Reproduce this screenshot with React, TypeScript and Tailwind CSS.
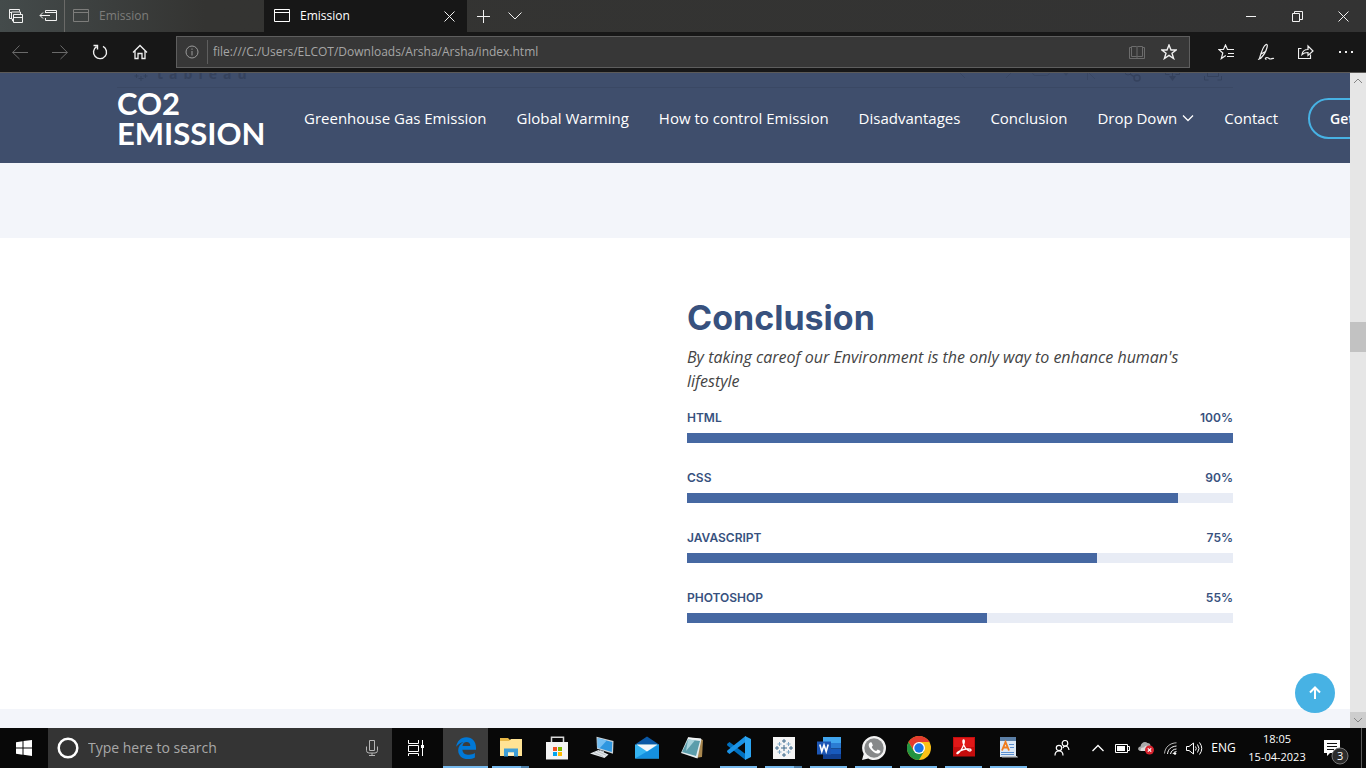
import React from "react";

type IconProps = { className?: string; children: React.ReactNode; w?: number; h?: number };

/** Thin-stroke icon drawn on a pixel grid of w x h. */
function Line({ className = "", children, w = 16, h = 16 }: IconProps) {
  return (
    <svg
      width={w}
      height={h}
      viewBox={`0 0 ${w} ${h}`}
      fill="none"
      stroke="currentColor"
      strokeWidth={1}
      aria-hidden="true"
      className={`shrink-0 ${className}`}
    >
      {children}
    </svg>
  );
}

function WindowIcon() {
  return (
    <Line w={16} h={14}>
      <path d="M.5.5h15v12H.5zM.5 3.5h15" />
    </Line>
  );
}

function TabStrip() {
  return (
    <div className="flex h-8 bg-linear-to-r from-[#444b4b] via-[#343432] via-15% to-[#333333] text-[#f2f2f2]">
      <div className="flex w-[65px] shrink-0 border-r border-[#6a6a68]">
        <button aria-label="Tabs you've set aside" className="grid w-8 place-items-center">
          <Line>
            <path d="M3 10.500H1.500v-9h10v2M1.500 4.500H4M7 13h-2.500v-2H3.500v-7h9v3" />
            <path fill="#434948" d="M5.500 6.500h9v8h-9zM5.500 9.500h9" />
          </Line>
        </button>
        <button aria-label="Set these tabs aside" className="grid w-8 place-items-center">
          <Line w={18}>
            <path d="M6.500 5V2.500h11v10h-11V10M6.500 4.500h11M1 7.500h10M4 4.500l-3 3 3 3" />
          </Line>
        </button>
      </div>
      <button className="flex w-[199px] shrink-0 items-center gap-2.5 px-2 text-xs text-[#7d7d7b]">
        <WindowIcon />
        Emission
      </button>
      <div className="flex w-[203px] shrink-0 items-center bg-[#171717] px-2.5">
        <button className="flex flex-1 items-center gap-2.5 text-xs text-white">
          <WindowIcon />
          Emission
        </button>
        <button aria-label="Close tab" className="grid size-4 place-items-center">
          <Line w={11} h={11}>
            <path d="M.5.5l10 10M10.500.5l-10 10" />
          </Line>
        </button>
      </div>
      <button aria-label="New tab" className="grid w-8 place-items-center">
        <Line w={13} h={13}>
          <path d="M6.500 0v13M0 6.500h13" />
        </Line>
      </button>
      <button aria-label="Show tab previews" className="grid w-8 place-items-center">
        <Line w={14} h={8}>
          <path d="M.5.5l6.500 6.500L13.500.5" />
        </Line>
      </button>
      <div className="ml-auto flex">
        <button aria-label="Minimize" className="grid w-[46px] place-items-center">
          <Line w={10} h={1}>
            <path d="M0 .5h10" />
          </Line>
        </button>
        <button aria-label="Restore" className="grid w-[46px] place-items-center">
          <Line w={11} h={11}>
            <path d="M.5 2.500h7v8h-7zM2.500 2.500v-2h8v8h-3" />
          </Line>
        </button>
        <button aria-label="Close" className="grid w-[46px] place-items-center">
          <Line w={11} h={11}>
            <path d="M.5.5l10 10M10.500.5l-10 10" />
          </Line>
        </button>
      </div>
    </div>
  );
}

const star = "M8 1l2 5h5.200l-4.200 3.300 1.600 5.200L8 11.400l-4.600 3.100L5 9.300.8 6H6z";

function Toolbar() {
  return (
    <div className="relative z-10 flex h-[41px] items-center border-b border-[#5c5a58] bg-[#171717] text-[#f0f0f0]">
      <button aria-label="Back" className="grid size-10 place-items-center text-[#6a6a6a]">
        <Line>
          <path d="M.5 8.500H16M7.500 1.500L.7 8.500l6.800 6.500" />
        </Line>
      </button>
      <button aria-label="Forward" className="grid size-10 place-items-center text-[#6a6a6a]">
        <Line>
          <path d="M0 8.500h15.500M8.500 1.500l6.800 7L8.500 15" />
        </Line>
      </button>
      <button aria-label="Refresh" className="grid size-10 place-items-center">
        <Line>
          <path strokeWidth={1.400} d="M11 2.400A6.500 6.500 0 1 1 4.500 2.700M1.500 1.500H5.500v4" />
        </Line>
      </button>
      <button aria-label="Home" className="grid size-10 place-items-center">
        <Line>
          <path strokeWidth={1.300} d="M1 8.500l7-7 7 7M3 7v7.500h3v-5h4v5h3V7" />
        </Line>
      </button>
      <div className="ml-4 flex h-8 flex-1 items-center border border-[#5e5e5e] bg-[#373737]">
        <span className="grid w-[30px] place-items-center text-[#9a9a9a]">
          <Line w={14} h={14}>
            <circle cx="7" cy="7" r="6" />
            <path d="M7 6v4.500M7 3.500v1.300" />
          </Line>
        </span>
        <span className="h-6 w-px bg-[#5e5e5e]" />
        <input
          aria-label="Address"
          readOnly
          value="file:///C:/Users/ELCOT/Downloads/Arsha/Arsha/index.html"
          className="min-w-0 flex-1 bg-transparent px-[5px] text-xs text-[#a6a6a6] outline-none"
        />
        <button aria-label="Reading view" className="grid w-8 place-items-center text-[#6c6c6c]">
          <Line>
            <path d="M7.500 2.500h-5v10h5l.5 1 .5-1h5v-10h-5l-.5.500zM8 3v10M2.500 3.500h-2v11h15v-11h-2" />
          </Line>
        </button>
        <button aria-label="Add to favorites" className="mr-1 grid w-8 place-items-center">
          <Line>
            <path strokeWidth={1.400} d={star} />
          </Line>
        </button>
      </div>
      <div className="ml-4 flex">
        <button aria-label="Favorites hub" className="grid size-10 place-items-center">
          <Line>
            <path strokeWidth={1.200} d="M10.500 5.500H9.500L7.500 1l-2 4.500H.8l4 3.500-1.500 5.500 4.500-3M9 5.500h7M10 9.500h6M9 12.500h7" />
          </Line>
        </button>
        <button aria-label="Add notes" className="grid size-10 place-items-center">
          <Line w={18} h={18}>
            <path strokeWidth={1.200} d="M2.500 15.500C4.500 8 7 2.500 9 1.500c1.500-.5 1.500 1 1 3-1 4-4 8.500-6.500 11l-2.500 1M4 11l4.500-2.500M9.500 16.500c-2-.5-1-2 .5-2s2 1.500 3.500 1.500 1.500-1 3.500-.5" />
          </Line>
        </button>
        <button aria-label="Share" className="grid size-10 place-items-center">
          <Line>
            <path strokeWidth={1.200} d="M3.500 4.500h-3v10h12v-4M4 10.500c.5-3.500 3-5 6-5v-3.500l5 5-5 4.500V8.500c-3 0-4.500.5-6 2z" />
          </Line>
        </button>
        <button aria-label="Settings and more" className="grid size-10 place-items-center">
          <Line w={14} h={2}>
            <path strokeWidth={2} d="M0 1h2M6 1h2M12 1h2" />
          </Line>
        </button>
      </div>
    </div>
  );
}

const navLinks = [
  { label: "Greenhouse Gas Emission" },
  { label: "Global Warming" },
  { label: "How to control Emission" },
  { label: "Disadvantages" },
  { label: "Conclusion" },
  { label: "Drop Down", menu: true },
  { label: "Contact" },
];

function SiteHeader() {
  return (
    <header className="relative h-[90px] bg-[#3f4e6c]">
      <div
        aria-hidden="true"
        className="absolute inset-x-0 top-0 mx-auto flex h-[15px] max-w-[1116px] items-end justify-between border-b border-[#3a4864] text-[#35425d]"
      >
        <div className="flex h-full items-end gap-2 pb-1.5 pl-4">
          <Line w={16} h={9}>
            <path d="M8 4v5M5.500 6.500h5M3.500 2v4M1.500 4h4M12.500 2v4M10.500 4h4M0 .5h3M6 .5h4M13 .5h3" />
          </Line>
          <div className="flex gap-1.5 text-sm leading-[14px] font-bold">
            {["t", "a", "b", "l", "e", "a", "u"].map((c, i) => (
              <span key={i}>{c}</span>
            ))}
          </div>
        </div>
        <Line w={274} h={15}>
          <path
            opacity=".6"
            d="M0 0l6 6M0 .5h13M53 0l-6 6M40 .5h13M73.500 0c0 2 1 3.500 3 3.500h11c2 0 3-1.500 3-3.500M128.500 0v8M129 0l7 7M129 .5h12"
          />
          <path opacity=".6" fill="currentColor" stroke="none" d="M104 0h6l-3 4z" />
          <circle cx="169" cy="0" r="3" />
          <circle cx="178" cy="6" r="3" strokeWidth={1.500} />
          <path strokeWidth={1.500} d="M171 2l4.500 3" />
          <path d="M206.500 0v2.500h4M220.500 0v2.500h-4M213.500 0v7M245.500 4v4h4M262.500 4v4h-4M248.500 0v4.500h11V0" />
          <path fill="currentColor" stroke="none" d="M210 4h7l-3.500 5z" />
        </Line>
      </div>
      <div className="mx-auto flex h-full max-w-[1140px] items-center px-3">
        <a href="#home" className="w-[157px] shrink-0 font-[Lato,sans-serif] text-[31px] leading-[30px] font-bold text-white">
          CO2 EMISSION
        </a>
        <nav className="flex shrink-0 items-center gap-[30px] pl-[30px] text-[15px] whitespace-nowrap text-white">
          {navLinks.map((l) => (
            <a key={l.label} href="#section" className="flex items-center gap-[5px]">
              {l.label}
              {l.menu && (
                <Line w={12} h={8}>
                  <path strokeWidth={1.300} d="M1 1.500l5 5 5-5" />
                </Line>
              )}
            </a>
          ))}
          <a href="#start" className="rounded-full border-2 border-[#47b2e4] px-5 py-2 text-sm leading-[21px] font-semibold">
            Get Started
          </a>
        </nav>
      </div>
    </header>
  );
}

const skills = [
  { name: "HTML", value: 100 },
  { name: "CSS", value: 90 },
  { name: "JAVASCRIPT", value: 75 },
  { name: "PHOTOSHOP", value: 55 },
];

function Conclusion() {
  return (
    <section className="bg-white py-[60px]">
      <div className="mx-auto grid max-w-[1140px] grid-cols-2">
        <div />
        <div className="px-3">
          <h2 className="mb-2 font-[Inter,sans-serif] text-[34px] leading-[39px] font-bold text-[#37517e]">Conclusion</h2>
          <p className="mb-4 text-base leading-6 text-[#444444] italic">
            By taking careof our Environment is the only way to enhance human's lifestyle
          </p>
          {skills.map((s) => (
            <div key={s.name} className="h-[60px]">
              <div className="mb-1.5 flex justify-between font-[Inter,sans-serif] text-xs leading-[18px] font-semibold text-[#37517e]">
                <span>{s.name}</span>
                <span>{s.value}%</span>
              </div>
              <div
                role="progressbar"
                aria-label={s.name}
                aria-valuenow={s.value}
                aria-valuemin={0}
                aria-valuemax={100}
                className="h-2.5 bg-[#e8ecf5]"
              >
                <div className="h-full bg-[#4668a2]" style={{ width: `${s.value}%` }} />
              </div>
            </div>
          ))}
        </div>
      </div>
    </section>
  );
}

function ScrollBar() {
  return (
    <div className="flex w-4 shrink-0 flex-col bg-[#e6e6e6] text-[#858585]">
      <button aria-label="Scroll up" className="grid h-4 place-items-center">
        <Line w={10} h={6}>
          <path d="M1 5l4-4 4 4" />
        </Line>
      </button>
      <div className="grow-[233]" />
      <div className="h-[30px] bg-[#c2c2c2]" />
      <div className="grow-[360]" />
      <button aria-label="Scroll down" className="grid h-4 place-items-center bg-[#cdcdcd]">
        <Line w={10} h={6}>
          <path d="M1 1l4 4 4-4" />
        </Line>
      </button>
    </div>
  );
}

type TaskApp = { name: string; state: "active" | "open" | "stacked" | "idle"; art: React.ReactNode };

const leadingApps: TaskApp[] = [
  {
    name: "Microsoft Edge",
    state: "active",
    art: (
      <path
        fill="#0078d7"
        d="M2.200 10.800C3 5 6.800 1.200 12.300 1.200c6.100 0 9.700 4.300 9.700 10.300v2.200H8.400c.2 3.700 3.200 5 6.500 5 2.500 0 4.500-.7 6-1.600v4.300c-1.700 1-4.200 1.700-7 1.700-6 0-9.700-3.500-9.700-8.800 0-3.700 2-6.800 5.400-8.400C7.300 6.200 4.200 8 2.200 10.800zM8.500 9.900h7.800c0-2.700-1.300-4-3.700-4-2.300 0-3.800 1.500-4.100 4z"
      />
    ),
  },
  {
    name: "File Explorer",
    state: "stacked",
    art: (
      <>
        <path fill="#e8b847" d="M1 2h8l2 2h11v2H1z" />
        <path fill="#ffe394" d="M1 5h9l2-2h11v17H1z" />
        <path fill="#3f9fd8" d="M5 12.500h14v8h-4v-4H9v4H5z" />
        <path fill="#fdf3cf" d="M9 16.500h6v3H9z" />
      </>
    ),
  },
];

const pinnedApps: TaskApp[] = [
  {
    name: "Microsoft Store",
    state: "idle",
    art: (
      <>
        <path fill="none" stroke="#d8d8d8" strokeWidth="1.500" d="M6.500 7V1.200h12V7" />
        <path fill="#f4f4f4" d="M1 6h22v17.500H1z" />
        <path fill="#f25022" d="M8 11h4v4H8z" />
        <path fill="#7fba00" d="M13 11h4v4h-4z" />
        <path fill="#00a4ef" d="M8 16h4v4H8z" />
        <path fill="#ffb900" d="M13 16h4v4h-4z" />
      </>
    ),
  },
  {
    name: "Remote Desktop",
    state: "idle",
    art: (
      <>
        <path fill="#c9d2d8" d="M6.500.8l17 4.300-.5 12.700-16-5z" />
        <path fill="#2f97e0" d="M7.700 2.300l14.600 3.800-.5 10L7.700 11.700z" />
        <path fill="#74bff3" d="M7.700 2.300l9 2.300-7 7.700-2-.6z" />
        <path fill="#aab2b8" d="M10 14l4 1v2l-4-1z" />
        <path fill="#e3e7ea" d="M0 17.500l8.500-3.500 10 4.500-4 3.500z" />
        <path stroke="#a9b0b5" strokeWidth=".7" d="M4 16.500l9 4M7 15.200l9 4" />
      </>
    ),
  },
  {
    name: "Mail",
    state: "idle",
    art: (
      <>
        <path fill="#0a58a6" d="M0 8.500L12 .5l12 8z" />
        <path fill="#35b4f2" d="M0 8.500h24v14H0z" />
        <path fill="#1590df" d="M24 8.500v14H0z" />
        <path fill="#f4f7fa" d="M1.500 8.500h21L12 15.500z" />
      </>
    ),
  },
  {
    name: "Notepad",
    state: "idle",
    art: (
      <>
        <path fill="#a8874f" d="M20.500 3l2.500 1-1 17-7 1z" />
        <path fill="#e4ecee" d="M8 1.500L21.500 3l-4 19.500L1 17z" />
        <path fill="#5b9dab" d="M8 3.500l12 1.500-4 15L2 16z" />
        <path fill="#a8d3dc" d="M8 3.500l7 .8L6 15z" />
        <path stroke="#f3f6f7" strokeWidth="1.400" d="M8 2l13 1.300" />
      </>
    ),
  },
];

const openApps: TaskApp[] = [
  {
    name: "Visual Studio Code",
    state: "open",
    art: (
      <>
        <path fill="#0070bf" d="M0 8l2.500-2L18.500 18v6L.3 9.500z" />
        <path fill="#1b93e6" d="M0 16l2.500 2L18.500 6V0L.3 14.500z" />
        <path fill="#2ba5f2" d="M18 0l6 3v18l-6 3z" />
      </>
    ),
  },
  {
    name: "Tableau",
    state: "stacked",
    art: (
      <>
        <path fill="#f5f5f5" d="M1 1h22v22H1z" />
        <path
          stroke="#3f6b8c"
          strokeWidth="1"
          d="M12 9v6M9 12h6M12 3v4M10 5h4M12 17v4M10 19h4M5 10v4M3 12h4M19 10v4M17 12h4"
        />
        <path
          stroke="#7fa6c4"
          strokeWidth="1"
          d="M7.500 6v4M5.500 8h4M16.500 6v4M14.500 8h4M7.500 14v4M5.500 16h4M16.500 14v4M14.500 16h4"
        />
      </>
    ),
  },
  {
    name: "Word",
    state: "open",
    art: (
      <>
        <path fill="#41a5ee" d="M6 1h18v6H6z" />
        <path fill="#2b7cd3" d="M6 7h18v5.500H6z" />
        <path fill="#185abd" d="M6 12.500h18V18H6z" />
        <path fill="#103f91" d="M6 18h18v5H6z" />
        <path fill="#1c56b5" d="M0 5.500h14v13H0z" />
        <path fill="none" stroke="#fff" strokeWidth="1.600" d="M2.800 8.500l2 7L7 9l2.200 6.500 2-7" />
      </>
    ),
  },
  {
    name: "WhatsApp",
    state: "open",
    art: (
      <>
        <path fill="#f2f2f2" d="M12 0a12 12 0 0 1 0 24c-2 0-4-.5-5.700-1.500L0 24l1.700-6A12 12 0 0 1 12 0z" />
        <circle cx="12" cy="12" r="9.700" fill="#87898a" />
        <path fill="#fff" d="M8.500 6.300c-2.500 1.200-2.200 4 0 6.700 2.500 3.200 6 5.500 8.500 4.300 1.200-.6 1.700-1.800 1.300-2.500l-2.600-1.400-1.500 1.700c-2-.8-3.800-2.500-4.500-4.200l1.200-1.500-1.200-3z" />
      </>
    ),
  },
  {
    name: "Google Chrome",
    state: "open",
    art: (
      <>
        <circle cx="12" cy="12" r="12" fill="#fbc116" />
        <path fill="#e33b2e" d="M1.600 6a12 12 0 0 1 20.800 0H12L7 15z" />
        <path fill="#229342" d="M1.600 6A12 12 0 0 0 12 24l5.200-9H6.800z" />
        <circle cx="12" cy="12" r="6" fill="#fff" />
        <circle cx="12" cy="12" r="4.700" fill="#1a73e8" />
      </>
    ),
  },
  {
    name: "Adobe Reader",
    state: "open",
    art: (
      <>
        <path fill="#c40d0d" d="M1 1h22v19.500H1z" />
        <path fill="#e01818" d="M2 2h20v9H2z" />
        <path fill="none" stroke="#fff" strokeWidth="1.300" d="M5 17.500c-1-1 5-4 9-4.500 4-.4 5.500.5 5 1.500-1 1.500-5-1-6.500-4S10.300 4 11.600 4s.7 4-1.100 7.500S6 18.500 5 17.500z" />
      </>
    ),
  },
  {
    name: "WordPad",
    state: "open",
    art: (
      <>
        <path fill="#dce8f5" d="M3 1h16v20H3z" />
        <path fill="#5b7fa6" d="M3 1h16v4H3z" />
        <path stroke="#5a8fd0" d="M12 8.500h5M13 11.500h4M4 16.500h13M4 18.500h13" />
        <path fill="none" stroke="#f07c1c" strokeWidth="1.900" d="M5 14.500L8.500 6l3.500 8.500M6 11.500h5" />
        <path fill="#b9c0c7" d="M4 20h16l1 1.500H5z" />
      </>
    ),
  },
];

function AppGroup({ apps, className = "" }: { apps: TaskApp[]; className?: string }) {
  return (
    <div className={`flex shrink-0 ${className}`}>
      {apps.map((app) => (
        <button
          key={app.name}
          aria-label={app.name}
          className={`relative grid w-[45px] shrink-0 place-items-center ${app.state === "active" ? "bg-[#3c3c3c]" : ""}`}
        >
          <svg width="24" height="24" viewBox="0 0 24 24" fill="none" aria-hidden="true">
            {app.art}
          </svg>
          {app.state === "active" && <span className="absolute inset-x-0 bottom-0 h-0.5 bg-[#76b9ed]" />}
          {app.state === "open" && <span className="absolute inset-x-1 bottom-0 h-0.5 bg-[#76b9ed]" />}
          {app.state === "stacked" && (
            <span className="absolute inset-x-1 bottom-0 flex h-0.5">
              <span className="flex-1 bg-[#76b9ed]" />
              <span className="w-2 bg-[#4d7fa8]" />
            </span>
          )}
        </button>
      ))}
    </div>
  );
}

function Taskbar() {
  return (
    <footer className="flex h-10 bg-[#080808] text-white">
      <button aria-label="Start" className="grid w-12 shrink-0 place-items-center">
        <svg width="16" height="16" viewBox="0 0 16 16" fill="#fff" aria-hidden="true">
          <path d="M0 2.200l6.500-.9v6.200H0zM7.500 1.100L16 0v7.500H7.500zM0 8.500h6.500v6.200L0 13.800zM7.500 8.500H16V16l-8.500-1.200z" />
        </svg>
      </button>
      <div className="flex w-[344px] shrink-0 items-center bg-[#343434] px-2">
        <svg width="24" height="24" viewBox="0 0 24 24" fill="none" aria-hidden="true">
          <circle cx="12" cy="12" r="9.300" stroke="#fff" strokeWidth="2.500" />
        </svg>
        <input
          aria-label="Search"
          placeholder="Type here to search"
          className="min-w-0 flex-1 bg-transparent px-2 text-sm outline-none placeholder:text-[#a8a8a8]"
        />
        <button aria-label="Speak" className="grid w-6 place-items-center text-[#b5b5b5]">
          <Line w={12} h={16}>
            <path d="M3.500.5h5v10h-5zM.5 6.500v4q0 2.500 2.500 2.500h6q2.500 0 2.500-2.500v-4M6 13v2.500M3 15.500h6" />
          </Line>
        </button>
      </div>
      <button aria-label="Task view" className="mr-[3px] grid w-12 shrink-0 place-items-center">
        <Line w={18}>
          <path d="M1.500 0v3.500h10V0M1.500 5.500h10v6h-10zM1.500 16v-2.500h10V16M15.500 0v16" />
          <path fill="#fff" stroke="none" d="M14 5h3v3h-3z" />
        </Line>
      </button>
      <AppGroup apps={leadingApps} />
      <AppGroup apps={pinnedApps} className="mx-px" />
      <AppGroup apps={openApps} className="ml-px" />
      <div className="ml-auto flex shrink-0 items-center">
        <button aria-label="People" className="mr-3 grid w-6 place-items-center">
          <Line>
            <path strokeWidth={1.200} d="M1 15.500c0-3 1.500-4.500 4-4.500s4 1.500 4 4.500M9 8c.5-1.500 1.500-2 2.500-2s3 1 3.500 4" />
            <circle cx="5" cy="8" r="2.700" strokeWidth={1.200} />
            <circle cx="11" cy="3.300" r="2.800" strokeWidth={1.200} />
          </Line>
        </button>
        <button aria-label="Show hidden icons" className="grid w-6 place-items-center">
          <Line w={12} h={8}>
            <path strokeWidth={1.300} d="M.5 7L6 1.500 11.500 7" />
          </Line>
        </button>
        <button aria-label="Battery" className="grid w-6 place-items-center">
          <Line w={15} h={9}>
            <path d="M.5.5h12v8H.5zM12.500 2.500h2v4h-2" />
            <path fill="#fff" stroke="none" d="M2 2h8v5H2z" />
          </Line>
        </button>
        <button aria-label="OneDrive" className="grid w-6 place-items-center">
          <svg width="16" height="14" viewBox="0 0 16 14" aria-hidden="true">
            <path fill="#a9a9a9" d="M2 10C-1 9 0 5.500 2.500 5.500 3 1.500 7 0 9.500 2c2 0 3 1 3 3v5z" />
            <path fill="#dcdcdc" d="M3 10c-1-2 .5-4 3-3.500C7 4 11 4 12 7v3z" />
            <circle cx="11.500" cy="9" r="4.500" fill="#d8232e" />
            <path stroke="#fff" strokeWidth="1.200" d="M9.800 7.300l3.400 3.400M13.200 7.300l-3.400 3.400" />
          </svg>
        </button>
        <button aria-label="Network" className="grid w-6 place-items-center">
          <Line w={13} h={13}>
            <path d="M.5 11.500C1 5 6 1 12.500.8" opacity=".7" />
            <path d="M3.500 12C4 7 7.500 4.500 12.500 4M6.500 12c.5-3 3-5 6-5M9 12c.5-1.500 2-2.500 3.500-2.500" />
            <circle cx="11" cy="11.500" r="1.300" fill="#fff" stroke="none" />
          </Line>
        </button>
        <button aria-label="Volume" className="grid w-6 place-items-center">
          <Line w={17} h={13}>
            <path d="M.5 4.500H3L7.500 1v11L3 8.500H.5zM9.500 4.500q1.500 2 0 4M11.500 2.500q3 4 0 8M13.500.5q4.500 6 0 12" />
          </Line>
        </button>
        <button aria-label="Language" className="w-[35px] text-xs">
          ENG
        </button>
        <div className="w-[72px] text-center text-[11px] leading-[18px]">
          <div>18:05</div>
          <div>15-04-2023</div>
        </div>
        <button aria-label="Notifications" className="relative mr-2.5 ml-2.5 grid h-10 w-7 pt-3">
          <svg width="28" height="26" viewBox="0 0 28 26" aria-hidden="true">
            <path fill="#fff" d="M1 0h16v13H7l-3 3v-3H1z" />
            <path stroke="#111" d="M4 3.500h10M4 6.500h10M4 9.500h7" />
            <circle cx="17" cy="16" r="8" fill="#2c2c2c" stroke="#777" />
          </svg>
          <span className="absolute top-5 left-3.5 text-[11px] leading-4">3</span>
        </button>
        <span className="mr-1 h-10 w-px bg-[#5a5a5a]" />
      </div>
    </footer>
  );
}

export default function App() {
  return (
    <div className="flex min-h-screen flex-col overflow-hidden font-['Open_Sans',sans-serif]">
      <TabStrip />
      <Toolbar />
      <div className="flex flex-1">
        <div className="relative flex min-w-0 flex-1 flex-col overflow-x-clip bg-[#f3f5fa]">
          <SiteHeader />
          <div className="h-[75px]" />
          <Conclusion />
          <button
            aria-label="Back to top"
            className="absolute right-[15px] bottom-[15px] grid size-10 place-items-center rounded-full bg-[#47b2e4] text-white"
          >
            <Line w={12} h={14}>
              <path strokeWidth={2} d="M6 13V2M1 6.500l5-5 5 5" />
            </Line>
          </button>
        </div>
        <ScrollBar />
      </div>
      <Taskbar />
    </div>
  );
}
